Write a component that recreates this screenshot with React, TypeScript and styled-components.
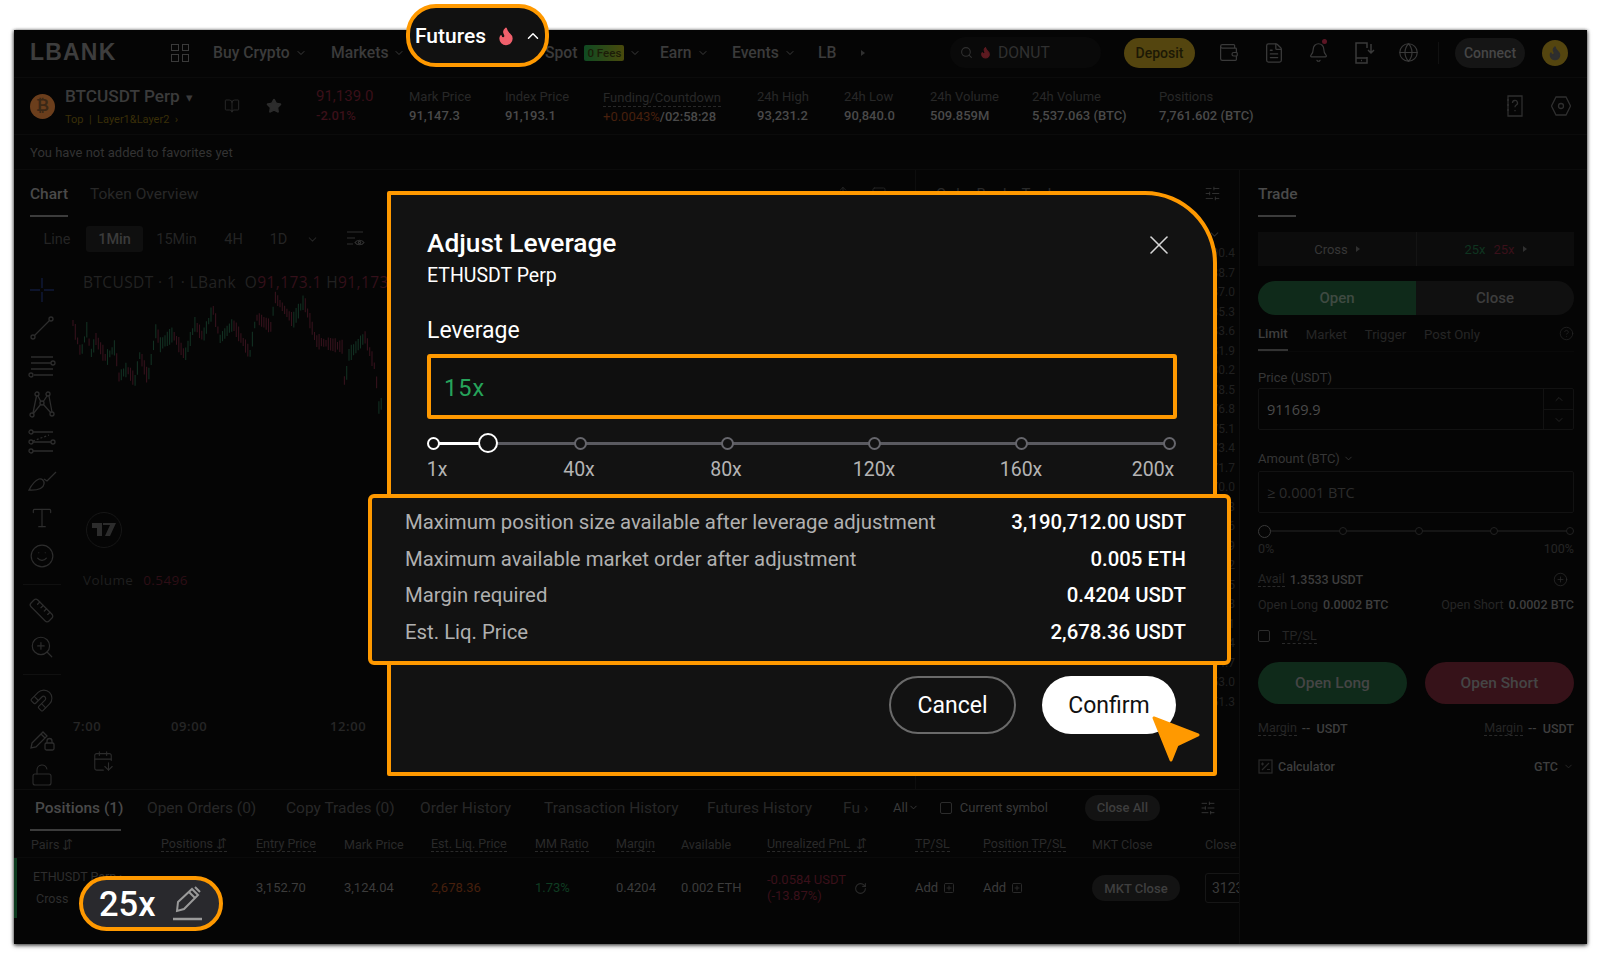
import React from "react";
import styled, { createGlobalStyle } from "styled-components";
import {
  Search, Flame, ChevronDown, ChevronUp, Wallet, FileText, Bell, Globe, Star, BookOpen, X,
  CirclePlus, CircleHelp, RotateCw, SquarePlus, SlidersHorizontal, Ruler, ZoomIn, Magnet, Smile, Type, LockOpen, CalendarArrowDown,
  Share, Square,
} from "lucide-react";

const Global = createGlobalStyle`
  html, body { margin: 0; background: #fff; }
  body { font-family: Roboto, "Noto Sans", "Liberation Sans", sans-serif; }
  * { box-sizing: border-box; }
`;

const orange = "#ff9900";
const dimA = "#3b3b3b";
const dimB = "#282828";
const dimC = "#4a4a4a";

const Stage = styled.div`
  position: relative;
  width: 1600px;
  height: 955px;
  padding: 30px 13px 11px 14px;
  overflow: hidden;
`;
const Win = styled.div`
  width: 100%;
  height: 100%;
  background: #050505;
  box-shadow: 0 2px 4px rgba(0, 0, 0, 0.55), -1px 0 3px rgba(0, 0, 0, 0.3), 1px 0 3px rgba(0, 0, 0, 0.3);
  display: flex;
  flex-direction: column;
  overflow: hidden;
`;

/* header */
const Header = styled.header`
  height: 48px;
  flex: none;
  display: flex;
  align-items: center;
  padding: 0 0 2px 16px;
  border-bottom: 1px solid #0b0b0b;
`;
const Logo = styled.div`
  width: 86px;
  font: 800 23px "Liberation Sans", sans-serif;
  letter-spacing: 1.2px;
  color: #3d3d3d;
  margin-right: 55px;
`;
const GridIcon = styled.div`
  width: 18px;
  height: 18px;
  display: grid;
  grid-template: 1fr 1fr / 1fr 1fr;
  gap: 3px;
  margin-right: 24px;
  span { border: 1.5px solid #3a3a3a; }
`;
const NavItem = styled.div<{ $w: number }>`
  width: ${(p) => p.$w}px;
  flex: none;
  display: flex;
  align-items: center;
  gap: 5px;
  font-size: 15.7px;
  font-weight: 500;
  color: ${dimA};
  white-space: nowrap;
  overflow: hidden;
`;
const Fees = styled.span`
  background: linear-gradient(90deg, #0f4a22, #4a4a0c);
  color: #1c1c08;
  font-size: 11.5px;
  padding: 1px 3px;
  border-radius: 2px;
  margin-left: 2px;
`;
const SearchBox = styled.div`
  width: 151px;
  height: 31px;
  margin-left: 85px;
  border-radius: 16px;
  background: #090909;
  display: flex;
  align-items: center;
  padding-left: 10px;
  gap: 6px;
  font-size: 15.7px;
  color: #303030;
`;
const Deposit = styled.div`
  width: 71px;
  height: 30px;
  margin-left: 23px;
  margin-right: 11px;
  border-radius: 15px;
  background: #54450f;
  color: #1c1805;
  font-size: 14px;
  font-weight: 500;
  display: flex;
  align-items: center;
  justify-content: center;
`;
const HeadIcon = styled.div`
  position: relative;
  width: 45px;
  flex: none;
  display: flex;
  justify-content: center;
  color: #3a3a3a;
`;
const Dot = styled.i`
  position: absolute;
  top: -3px;
  left: 26px;
  width: 5px;
  height: 5px;
  border-radius: 50%;
  background: #5c1524;
`;
const Divider = styled.div`
  width: 1px;
  height: 22px;
  background: #111;
  margin: 0 16px 0 7px;
`;
const Connect = styled.div`
  width: 70px;
  height: 30px;
  border-radius: 15px;
  background: #151515;
  color: #464646;
  font-size: 14px;
  font-weight: 500;
  display: flex;
  align-items: center;
  justify-content: center;
  margin-right: 17px;
`;
const Avatar = styled.div`
  width: 26px;
  height: 26px;
  border-radius: 50%;
  background: #54450f;
  display: flex;
  align-items: center;
  justify-content: center;
`;

/* ticker */
const Ticker = styled.div`
  height: 57px;
  flex: none;
  display: flex;
  align-items: center;
  padding-left: 16px;
  border-bottom: 1px solid #0b0b0b;
`;
const Coin = styled.div`
  width: 25px;
  height: 25px;
  border-radius: 50%;
  background: #6b3e1c;
  color: #3b2816;
  font: 700 16px "Liberation Sans", sans-serif;
  display: flex;
  align-items: center;
  justify-content: center;
  margin-right: 10px;
`;
const Pair = styled.div`
  width: 146px;
`;
const PairName = styled.div`
  font-size: 17.2px;
  font-weight: 500;
  color: ${dimA};
  line-height: 22px;
  margin-bottom: 3px;
  white-space: nowrap;
  span { margin-left: 6px; font-size: 13px; }
`;
const PairTags = styled.div`
  font-size: 11px;
  line-height: 16px;
  color: #3a2f08;
`;
const TickIcon = styled.div`
  width: 42px;
  display: flex;
  justify-content: center;
  color: #2c2c2c;
`;
const Stat = styled.div<{ $w: number; $ml?: number }>`
  width: ${(p) => p.$w}px;
  margin-left: ${(p) => p.$ml ?? 0}px;
  flex: none;
  white-space: nowrap;
`;
const StatLabel = styled.div<{ $dash?: boolean; $c?: string; $big?: boolean }>`
  font-size: ${(p) => (p.$big ? 15 : 13)}px;
  line-height: 19px;
  color: ${(p) => p.$c ?? dimB};
  ${(p) => p.$dash && `display:inline-block; line-height: 17px; border-bottom: 1px dashed ${dimB};`}
`;
const StatValue = styled.div<{ $c?: string }>`
  font-size: 13px;
  font-weight: 500;
  line-height: 19px;
  color: ${(p) => p.$c ?? dimC};
  span { color: #47200d; font-weight: 400; }
`;
const TickRight = styled.div`
  margin-left: auto;
  display: flex;
  align-items: center;
  color: #2f2f2f;
  gap: 27px;
  padding-right: 16px;
`;
const Favorites = styled.div`
  height: 35px;
  flex: none;
  display: flex;
  align-items: center;
  padding-left: 16px;
  font-size: 13px;
  color: #333;
  border-bottom: 1px solid #0b0b0b;
`;

/* body */
const Body = styled.div`
  flex: 1;
  min-height: 0;
  display: flex;
`;
const LeftCol = styled.div`
  width: 1226px;
  flex: none;
  display: flex;
  flex-direction: column;
  border-right: 1px solid #0d0d0d;
`;
const Upper = styled.div`
  height: 620px;
  flex: none;
  display: flex;
  border-bottom: 1px solid #0d0d0d;
`;
const ChartCol = styled.div`
  width: 902px;
  flex: none;
  display: flex;
  flex-direction: column;
  border-right: 1px solid #0d0d0d;
`;
const Tabs = styled.div<{ $h: number; $pl?: number }>`
  height: ${(p) => p.$h}px;
  flex: none;
  display: flex;
  padding-left: ${(p) => p.$pl ?? 0}px;
  align-items: stretch;
`;
const Tab = styled.div<{ $on?: boolean; $w?: number; $ul?: number; $pb?: number }>`
  position: relative;
  ${(p) => (p.$w ? `width: ${p.$w}px; flex: none;` : "")}
  font-size: 15.5px;
  font-weight: ${(p) => (p.$on ? 500 : 400)};
  color: ${(p) => (p.$on ? dimC : dimB)};
  display: flex;
  align-items: center;
  padding-bottom: ${(p) => p.$pb ?? 0}px;
  white-space: nowrap;
  &::after {
    content: "";
    display: ${(p) => (p.$on ? "block" : "none")};
    position: absolute;
    left: ${(p) => (p.$ul ? -5 : 0)}px;
    bottom: 0;
    width: ${(p) => p.$ul ?? 38}px;
    height: 2px;
    background: #3c3c3c;
  }
`;
const TabIcons = styled.div`
  margin-left: auto;
  padding-right: 28px;
  display: flex;
  align-items: center;
  gap: 20px;
  color: #2a2a2a;
`;
const TimeBar = styled.div`
  height: 44px;
  flex: none;
  display: flex;
  align-items: center;
  padding-left: 14px;
  font-size: 14.5px;
  color: #242424;
`;
const TimeItem = styled.div<{ $w: number; $on?: boolean }>`
  width: ${(p) => p.$w}px;
  height: 26px;
  flex: none;
  display: flex;
  align-items: center;
  justify-content: center;
  border-radius: 3px;
  ${(p) => p.$on && `background:#0f0f0f; color:#3b3b3b; font-weight:500;`}
`;
const TimeChevron = styled.div`
  margin-left: 6px;
  display: flex;
`;
const TimeIcon = styled.div`
  margin-left: 27px;
  display: flex;
  color: #303030;
`;
const ChartBody = styled.div`
  flex: 1;
  min-height: 0;
  display: flex;
`;
const ToolRail = styled.div`
  width: 55px;
  flex: none;
  padding-top: 10px;
  display: flex;
  flex-direction: column;
  align-items: center;
  color: #2d2d2d;
  overflow: hidden;
`;
const Tool = styled.div<{ $h: number }>`
  height: ${(p) => p.$h}px;
  flex: none;
  display: flex;
  align-items: center;
  justify-content: center;
`;
const RailSep = styled.div<{ $mt: number }>`
  width: 38px;
  height: 1px;
  flex: none;
  margin-top: ${(p) => p.$mt}px;
  background: #101010;
`;
const Plot = styled.div`
  position: relative;
  flex: 1;
  font-family: "Open Sans", "Liberation Sans", sans-serif;
`;
const Legend = styled.div`
  position: absolute;
  left: 14px;
  top: 10px;
  font-size: 15.5px;
  letter-spacing: 0.4px;
  color: #222;
  white-space: nowrap;
  span { color: #34101a; }
`;
const VolumeTag = styled.div`
  position: absolute;
  left: 14px;
  top: 310px;
  font-size: 13.5px;
  letter-spacing: 0.4px;
  color: #1f1f1f;
  span { color: #2d0e16; margin-left: 6px; }
`;
const TV = styled.div`
  position: absolute;
  left: 17px;
  top: 251px;
  width: 36px;
  height: 36px;
  border-radius: 50%;
  border: 1px solid #161616;
  color: #2c2c2c;
  display: flex;
  align-items: center;
  justify-content: center;
`;
const TimeLabel = styled.div<{ $x: number }>`
  position: absolute;
  left: ${(p) => p.$x}px;
  top: 456px;
  font-size: 13px;
  font-weight: 600;
  letter-spacing: 0.6px;
  color: #262626;
`;
const CalendarSpot = styled.div`
  position: absolute;
  left: 23px;
  top: 489px;
  color: #2c2c2c;
`;
const ChartSvg = styled.svg`
  position: absolute;
  left: 0;
  top: 0;
`;
const Book = styled.div`
  flex: 1;
  min-width: 0;
  padding: 0 18px 0 20px;
  display: flex;
  flex-direction: column;
`;
const BookHead = styled.div`
  height: 47px;
  flex: none;
  display: flex;
  align-items: center;
  justify-content: space-between;
  font-size: 15px;
  color: #2a2a2a;
  svg { color: #333; }
`;
const BookFilter = styled.div`
  height: 24px;
  flex: none;
  margin-top: 5px;
  display: flex;
  justify-content: flex-end;
  align-items: center;
  color: #2a2a2a;
`;
const BookRow = styled.div`
  height: 19.5px;
  flex: none;
  margin-right: -14px;
  font-size: 12px;
  text-align: right;
  color: #202020;
`;

/* positions */
const Positions = styled.div`
  flex: 1;
  min-height: 0;
  overflow: hidden;
`;
const PosTools = styled.div`
  display: flex;
  align-items: center;
  padding-bottom: 6px;
  font-size: 13px;
  color: #3a3a3a;
  white-space: nowrap;
`;
const AllSpace = styled.span`
  width: 21px;
`;
const Check = styled.span<{ $mr: number }>`
  width: 12px;
  height: 12px;
  border: 1px solid #2c2c2c;
  border-radius: 2px;
  margin-right: ${(p) => p.$mr}px;
  flex: none;
`;
const CloseAll = styled.div`
  width: 75px;
  height: 26px;
  margin: 0 40px 0 37px;
  border-radius: 13px;
  background: #131313;
  color: #3e3e3e;
  display: flex;
  align-items: center;
  justify-content: center;
  font-weight: 500;
`;
const colTpl = "130px 95px 88px 87px 104px 81px 65px 86px 148px 68px 109px 113px 40px";
const HeadRow = styled.div`
  height: 27px;
  display: grid;
  grid-template-columns: ${colTpl};
  align-items: center;
  padding-left: 17px;
  font-size: 12.5px;
  color: #2a2a2a;
  white-space: nowrap;
  border-bottom: 1px solid #0a0a0a;
`;
const Dash = styled.span`
  border-bottom: 1px dashed #2a2a2a;
  justify-self: start;
`;
const DataRow = styled.div`
  height: 60px;
  display: grid;
  grid-template-columns: ${colTpl};
  align-items: center;
  padding-left: 14px;
  border-left: 3px solid #0c3a1e;
  font-size: 13px;
  color: #3c3c3c;
  white-space: nowrap;
`;
const PairCell = styled.div`
  font-size: 12.5px;
  line-height: 22px;
  color: #2e2e2e;
  padding-left: 2px;
`;
const Cell = styled.div<{ $c?: string }>`
  color: ${(p) => p.$c ?? "#3c3c3c"};
  display: flex;
  align-items: center;
  gap: 5px;
  line-height: 16px;
`;
const PnL = styled.div`
  color: #3a101a;
  line-height: 16px;
`;
const PnLCell = styled.div`
  display: flex;
  align-items: center;
  gap: 8px;
  svg { color: #2a2a2a; }
`;
const MktBtn = styled.div`
  width: 88px;
  height: 26px;
  border-radius: 13px;
  background: #131313;
  color: #3f3f3f;
  font-weight: 500;
  display: flex;
  align-items: center;
  justify-content: center;
`;
const CloseInput = styled.div`
  width: 60px;
  height: 30px;
  border: 1px solid #161616;
  border-radius: 3px;
  padding: 0 6px;
  font-size: 14px;
  line-height: 28px;
  color: #3a3a3a;
`;

/* trade */
const Trade = styled.aside`
  flex: 1;
  padding: 0 13px 0 18px;
  display: flex;
  flex-direction: column;
`;
const CrossBox = styled.div`
  margin-top: 15px;
  height: 34px;
  flex: none;
  background: #0c0c0c;
  display: grid;
  grid-template-columns: 1fr 1fr;
  font-size: 13px;
  color: #373737;
  & > div { display: flex; align-items: center; justify-content: center; gap: 8px; }
  & > div + div { border-left: 1px solid #141414; }
`;
const Tri = styled.i`
  width: 0;
  height: 0;
  border-left: 4px solid #303030;
  border-top: 3px solid transparent;
  border-bottom: 3px solid transparent;
`;
const Leverage = styled.span<{ $c: string }>`
  color: ${(p) => p.$c};
`;
const Switch = styled.div`
  margin-top: 15px;
  height: 34px;
  flex: none;
  display: grid;
  grid-template-columns: 1fr 1fr;
  font-size: 15px;
  font-weight: 500;
  border-radius: 17px;
  overflow: hidden;
`;
const SwitchPart = styled.div<{ $on?: boolean }>`
  display: flex;
  align-items: center;
  justify-content: center;
  background: ${(p) => (p.$on ? "#0f2a1a" : "#101010")};
  color: ${(p) => (p.$on ? "#3f4a42" : "#3d3d3d")};
`;
const OrderTabs = styled.div`
  height: 37px;
  flex: none;
  display: flex;
  align-items: stretch;
  gap: 18px;
  font-size: 13.2px;
  color: #262626;
  border-bottom: 1px solid #090909;
  & > svg { margin-left: auto; align-self: center; color: #252525; }
`;
const OrderTab = styled.div<{ $on?: boolean }>`
  position: relative;
  display: flex;
  align-items: center;
  padding-top: 2px;
  ${(p) => p.$on && `color:#3e3e3e; font-weight:500; border-bottom: 2px solid #333;`}
`;
const FieldLabel = styled.div<{ $mt: number }>`
  margin-top: ${(p) => p.$mt}px;
  height: 20px;
  flex: none;
  display: flex;
  align-items: center;
  gap: 3px;
  font-size: 13px;
  color: #363636;
`;
const Field = styled.div<{ $mt: number; $c: string }>`
  margin-top: ${(p) => p.$mt}px;
  height: 42px;
  flex: none;
  display: flex;
  align-items: center;
  justify-content: space-between;
  padding-left: 8px;
  border: 1px solid #121212;
  border-radius: 2px;
  font-family: "Open Sans", "Liberation Sans", sans-serif;
  font-size: 14.5px;
  color: ${(p) => p.$c};
`;
const Stepper = styled.div`
  width: 30px;
  height: 100%;
  border-left: 1px solid #121212;
  display: grid;
  grid-template-rows: 1fr 1fr;
  color: #242424;
  & > div { display: flex; align-items: center; justify-content: center; }
  & > div + div { border-top: 1px solid #121212; }
`;
const MiniSlider = styled.div`
  position: relative;
  height: 14px;
  margin-top: 11px;
  flex: none;
  display: flex;
  align-items: center;
  justify-content: space-between;
  &::before {
    content: "";
    position: absolute;
    left: 6px;
    right: 4px;
    top: 6px;
    height: 1.5px;
    background: #151515;
  }
`;
const MiniDot = styled.i<{ $big?: boolean }>`
  position: relative;
  width: ${(p) => (p.$big ? 13 : 8)}px;
  height: ${(p) => (p.$big ? 13 : 8)}px;
  border-radius: 50%;
  border: 1px solid ${(p) => (p.$big ? "#3a3a3a" : "#222")};
  background: #050505;
`;
const Between = styled.div<{ $mt: number; $h: number; $size?: number }>`
  margin-top: ${(p) => p.$mt}px;
  height: ${(p) => p.$h}px;
  flex: none;
  display: flex;
  align-items: center;
  justify-content: space-between;
  font-size: ${(p) => p.$size ?? 12.5}px;
  color: #262626;
  white-space: nowrap;
`;
const Group = styled.div`
  display: flex;
  align-items: center;
  gap: 5px;
  svg { color: #2a2a2a; }
`;
const AddFunds = styled.div`
  display: flex;
  margin-right: 6px;
  color: #2c2c2c;
`;
const Val = styled.span`
  color: #3e3e3e;
  font-weight: 500;
`;
const Under = styled.span`
  border-bottom: 1px dashed #2a2a2a;
`;
const Buy = styled.div<{ $bg: string }>`
  width: 149px;
  height: 42px;
  border-radius: 21px;
  background: ${(p) => p.$bg};
  color: #454545;
  font-size: 15.5px;
  font-weight: 500;
  display: flex;
  align-items: center;
  justify-content: center;
`;

/* overlays */
const FuturesPill = styled.div`
  position: absolute;
  left: 406px;
  top: 4px;
  width: 143px;
  height: 63px;
  border: 4px solid ${orange};
  border-radius: 30px;
  background: #111;
  color: #fff;
  font-size: 21px;
  font-weight: 500;
  display: flex;
  align-items: center;
  padding-left: 5px;
  svg:first-of-type { margin-left: 10px; }
  svg:last-of-type { margin-left: 8px; }
`;
const LevPill = styled.div`
  position: absolute;
  left: 79px;
  top: 876px;
  width: 144px;
  height: 55px;
  border: 4px solid ${orange};
  border-radius: 28px;
  background: #29292d;
  color: #fff;
  font-size: 34.5px;
  font-weight: 500;
  display: flex;
  align-items: center;
  padding-left: 16px;
  gap: 16px;
`;
const Modal = styled.div`
  position: absolute;
  left: 387px;
  top: 191px;
  width: 830px;
  height: 585px;
  background: #121212;
  border: 4px solid ${orange};
  border-radius: 2px 72px 3px 2px;
  padding: 31px 36px 0 36px;
`;
const ModalHead = styled.div`
  display: flex;
  align-items: flex-start;
  justify-content: space-between;
`;
const Title = styled.div`
  font-size: 26.3px;
  font-weight: 500;
  line-height: 34px;
  color: #fff;
`;
const Sub = styled.div`
  margin-top: 4px;
  font-size: 19.5px;
  line-height: 24px;
  color: #fff;
`;
const CloseX = styled.div`
  margin: 3px 2px 0 0;
  color: #d6d6d6;
  display: flex;
`;
const Label = styled.div`
  margin-top: 30px;
  font-size: 23px;
  line-height: 26px;
  color: #fff;
`;
const LevInput = styled.div`
  margin-top: 10px;
  height: 65px;
  border: 4px solid ${orange};
  border-radius: 3px;
  background: #0f0f0f;
  display: flex;
  align-items: center;
  padding-left: 13px;
  font-size: 23.5px;
  letter-spacing: 1px;
  padding-top: 3px;
  color: #26a35a;
`;
const SliderBox = styled.div`
  position: relative;
  margin-top: 12px;
  height: 24px;
`;
const Rail = styled.div`
  position: absolute;
  left: 6px;
  right: 8px;
  top: 10.5px;
  height: 3px;
  background: #5a5a60;
`;
const RailOn = styled.div`
  position: absolute;
  left: 6px;
  width: 56px;
  top: 10.5px;
  height: 3px;
  background: #fff;
`;
const Mark = styled.i<{ $x: number; $on?: boolean }>`
  position: absolute;
  left: ${(p) => p.$x - 6.5}px;
  top: 5.5px;
  width: 13px;
  height: 13px;
  border-radius: 50%;
  border: 2px solid ${(p) => (p.$on ? "#fff" : "#66666c")};
  background: #121212;
`;
const Thumb = styled.i`
  position: absolute;
  left: 51px;
  top: 2px;
  width: 20px;
  height: 20px;
  border-radius: 50%;
  border: 2.5px solid #fff;
  background: #121212;
`;
const ScaleBox = styled.div`
  position: relative;
  margin-top: 3px;
  height: 24px;
`;
const ScaleLabel = styled.span<{ $x: number }>`
  position: absolute;
  left: ${(p) => p.$x}px;
  transform: translateX(-50%);
  font-size: 19.5px;
  line-height: 24px;
  color: #b4b4b4;
`;
const InfoBox = styled.div`
  margin: 12px -54px 0 -59px;
  height: 171px;
  background: #121212;
  border: 4px solid ${orange};
  border-radius: 6px;
  padding: 6px 41px 0 33px;
  position: relative;
`;
const InfoRow = styled.div`
  height: 36.5px;
  display: flex;
  align-items: center;
  justify-content: space-between;
  font-size: 20.35px;
  color: #b0b0b0;
`;
const InfoVal = styled.span`
  color: #fff;
  font-weight: 500;
`;
const BtnRow = styled.div`
  margin-top: 11px;
  padding-right: 1px;
  display: flex;
  justify-content: flex-end;
  gap: 26px;
`;
const Cancel = styled.div`
  width: 127px;
  height: 58px;
  border-radius: 29px;
  border: 2px solid #6a6a6a;
  color: #fff;
  font-size: 23px;
  display: flex;
  align-items: center;
  justify-content: center;
`;
const Confirm = styled(Cancel)`
  width: 134px;
  border: none;
  background: #fff;
  color: #111;
`;
const CursorArrow = styled.svg`
  position: absolute;
  left: 1148px;
  top: 712px;
`;

const pts: [number, number][] = [
  [0, 54], [8, 85], [14, 60], [18, 85], [23, 70], [33, 90], [42, 78], [46, 108], [54, 100], [62, 112], [67, 85], [75, 110],
  [84, 55], [86, 77], [100, 65], [112, 87], [122, 55], [130, 68], [140, 40], [147, 70], [160, 55], [177, 85], [183, 48],
  [198, 58], [202, 28], [220, 52], [231, 32], [243, 72], [270, 78], [272, 126], [275, 87], [292, 68], [303, 102], [305, 140], [310, 132],
];
function buildCandles() {
  const out: { x: number; y1: number; y2: number; up: boolean }[] = [];
  for (let x = 0; x < 310; x += 2.3) {
    let i = 0;
    while (i < pts.length - 2 && pts[i + 1][0] < x) i++;
    const [a, b] = [pts[i], pts[i + 1]];
    const t = (x - a[0]) / Math.max(1, b[0] - a[0]);
    const y = a[1] + (b[1] - a[1]) * t;
    const j = (Math.sin(x * 12.9898) * 43758.5453) % 1;
    const h = 6 + Math.abs(j) * 10;
    out.push({ x, y1: y - h / 2, y2: y + h / 2, up: b[1] < a[1] });
  }
  return out;
}
const candles = buildCandles();
const bookPrices = Array.from({ length: 24 }, (_, i) => (91190.4 - i * 1.7).toFixed(1));

const Cross = () => (
  <svg width="28" height="28" viewBox="0 0 28 28" fill="none" stroke="#101a3a" strokeWidth="1.4">
    <path d="M14 2v10M14 16v10M2 14h10M16 14h10" />
  </svg>
);
const LineTool = () => (
  <svg width="28" height="28" viewBox="0 0 28 28" fill="none" stroke="currentColor" strokeWidth="1.3">
    <circle cx="5" cy="23" r="2" /><circle cx="23" cy="5" r="2" /><path d="M6.5 21.5 21.5 6.5" />
  </svg>
);
const HLines = () => (
  <svg width="30" height="28" viewBox="0 0 30 28" fill="none" stroke="currentColor" strokeWidth="1.3">
    <path d="M4 5h22M4 11h20M4 17h22M7 23h19" /><circle cx="26" cy="11" r="2" /><circle cx="4" cy="23" r="2" />
  </svg>
);
const NetTool = () => (
  <svg width="28" height="28" viewBox="0 0 28 28" fill="none" stroke="currentColor" strokeWidth="1.3">
    <circle cx="4" cy="25" r="2" /><circle cx="9" cy="4" r="2" /><circle cx="20" cy="4" r="2" /><circle cx="24" cy="24" r="2" /><circle cx="14" cy="13" r="2" />
    <path d="M5 23 8.5 6M10 6l3 6M19 6l-4 6M21 6l3 16M5 24 13 14M15 14l8 9" />
  </svg>
);
const FibTool = () => (
  <svg width="30" height="26" viewBox="0 0 30 26" fill="none" stroke="currentColor" strokeWidth="1.3">
    <circle cx="4" cy="3" r="2" /><circle cx="4" cy="13" r="2" /><circle cx="26" cy="13" r="2" /><circle cx="4" cy="22" r="2" />
    <path d="M6 3h20M6 13h18M6 22h20" /><path d="M6 12 22 6" strokeDasharray="2 2" />
  </svg>
);
const BrushTool = () => (
  <svg width="30" height="26" viewBox="0 0 30 26" fill="none" stroke="currentColor" strokeWidth="1.3">
    <path d="M2 23c4 0 14 1 15-6 .5-3-2-6-5-5-5 2-8 7-10 11ZM17 12l3 2 9-9" />
  </svg>
);
const Lock2 = () => (
  <svg width="26" height="26" viewBox="0 0 26 26" fill="none" stroke="currentColor" strokeWidth="1.3">
    <path d="m3 17 11-11 4 4-11 11-5 1zM12 8l4 4" /><rect x="16" y="17" width="9" height="7" rx="1.5" /><path d="M18 17v-2a2.5 2.5 0 0 1 5 0v2" />
  </svg>
);
const PencilUnder = () => (
  <svg width="32" height="36" viewBox="0 0 32 36" fill="none" stroke="#9a9a9a" strokeWidth="2">
    <path d="M5 25 6 16 20 3l6 6-14 14-7 2ZM17 6l6 6M23 1l5 5" />
    <path d="M1 33h29" strokeWidth="2.5" />
  </svg>
);
const Phone = () => (
  <svg width="22" height="24" viewBox="0 0 22 24" fill="none" stroke="currentColor" strokeWidth="1.5">
    <path d="M14 7V2H3v20h11v-6M3 17h11M8 19.5h1M18 3v9m-3-3 3 3 3-3" />
  </svg>
);
const HelpDoc = () => (
  <svg width="18" height="22" viewBox="0 0 18 22" fill="none" stroke="currentColor" strokeWidth="1.3">
    <path d="M2 1h14v20H2zM1 5h2M1 10h2M1 15h2" />
    <path d="M6.5 8a2.5 2.5 0 1 1 3.6 2.2c-.8.5-1.1 1-1.1 2M9 15v1.2" />
  </svg>
);
const HexGear = () => (
  <svg width="20" height="22" viewBox="0 0 20 22" fill="none" stroke="currentColor" strokeWidth="1.3">
    <path d="M5 2h10l4.500 9L15 20H5L.5 11z" /><circle cx="10" cy="11" r="2.500" />
  </svg>
);
const EyeList = () => (
  <svg width="20" height="18" viewBox="0 0 20 18" fill="none" stroke="currentColor" strokeWidth="1.2">
    <path d="M1 2h16M1 8h8M1 14h6" /><path d="M9 12.500c2-3 7-3 9 0-2 3-7 3-9 0Z" /><circle cx="13.500" cy="12.500" r="1.200" />
  </svg>
);
const PercentBox = () => (
  <svg width="15" height="15" viewBox="0 0 15 15" fill="none" stroke="currentColor" strokeWidth="1.2">
    <rect x="1" y="1" width="13" height="13" /><path d="M4 11 11 4M3 5h3M4.500 3.500v3M9 10.500h3" />
  </svg>
);

export default function App() {
  return (
    <>
      <Global />
      <Stage>
        <Win>
          <Header>
            <Logo>LBANK</Logo>
            <GridIcon><span /><span /><span /><span /></GridIcon>
            <NavItem $w={118}>Buy Crypto <ChevronDown size={12} /></NavItem>
            <NavItem $w={214}>Markets <ChevronDown size={12} /></NavItem>
            <NavItem $w={115}>Spot <Fees>0 Fees</Fees> <ChevronDown size={12} /></NavItem>
            <NavItem $w={72}>Earn <ChevronDown size={12} /></NavItem>
            <NavItem $w={86}>Events <ChevronDown size={12} /></NavItem>
            <NavItem $w={43}>LB</NavItem>
            <Tri />
            <SearchBox><Search size={13} /><Flame size={13} fill="#5c1a20" color="#5c1a20" />DONUT</SearchBox>
            <Deposit>Deposit</Deposit>
            <HeadIcon><Wallet size={21} strokeWidth={1.4} /></HeadIcon>
            <HeadIcon><FileText size={22} strokeWidth={1.4} /></HeadIcon>
            <HeadIcon><Bell size={21} strokeWidth={1.4} /><Dot /></HeadIcon>
            <HeadIcon><Phone /></HeadIcon>
            <HeadIcon><Globe size={21} strokeWidth={1.3} /></HeadIcon>
            <Divider />
            <Connect>Connect</Connect>
            <Avatar><Flame size={16} fill="#2e2e2e" color="#2e2e2e" /></Avatar>
          </Header>
          <Ticker>
            <Coin>₿</Coin>
            <Pair>
              <PairName>BTCUSDT Perp<span>▾</span></PairName>
              <PairTags>Top&nbsp; | &nbsp;Layer1&amp;Layer2 &nbsp;›</PairTags>
            </Pair>
            <TickIcon><BookOpen size={16} strokeWidth={1.3} /></TickIcon>
            <TickIcon><Star size={16} fill="#2c2c2c" /></TickIcon>
            <Stat $w={93} $ml={21}>
              <StatLabel $c="#3a1019" $big>91,139.0</StatLabel>
              <StatValue $c="#3a1019">-2.01%</StatValue>
            </Stat>
            <Stat $w={96}><StatLabel>Mark Price</StatLabel><StatValue>91,147.3</StatValue></Stat>
            <Stat $w={98}><StatLabel>Index Price</StatLabel><StatValue>91,193.1</StatValue></Stat>
            <Stat $w={154}><StatLabel $dash>Funding/Countdown</StatLabel><StatValue><span>+0.0043%</span>/02:58:28</StatValue></Stat>
            <Stat $w={87}><StatLabel>24h High</StatLabel><StatValue>93,231.2</StatValue></Stat>
            <Stat $w={86}><StatLabel>24h Low</StatLabel><StatValue>90,840.0</StatValue></Stat>
            <Stat $w={102}><StatLabel>24h Volume</StatLabel><StatValue>509.859M</StatValue></Stat>
            <Stat $w={127}><StatLabel>24h Volume</StatLabel><StatValue>5,537.063 (BTC)</StatValue></Stat>
            <Stat $w={120}><StatLabel>Positions</StatLabel><StatValue>7,761.602 (BTC)</StatValue></Stat>
            <TickRight><HelpDoc /><HexGear /></TickRight>
          </Ticker>
          <Favorites>You have not added to favorites yet</Favorites>
          <Body>
            <LeftCol>
              <Upper>
                <ChartCol>
                  <Tabs $h={47} $pl={16}>
                    <Tab $on $w={60}>Chart</Tab>
                    <Tab>Token Overview</Tab>
                    <TabIcons><Share size={16} strokeWidth={1.2} /><Square size={16} strokeWidth={1.2} /></TabIcons>
                  </Tabs>
                  <TimeBar>
                    <TimeItem $w={58}>Line</TimeItem>
                    <TimeItem $w={57} $on>1Min</TimeItem>
                    <TimeItem $w={67}>15Min</TimeItem>
                    <TimeItem $w={47}>4H</TimeItem>
                    <TimeItem $w={43}>1D</TimeItem>
                    <TimeChevron><ChevronDown size={13} /></TimeChevron>
                    <TimeIcon><EyeList /></TimeIcon>
                  </TimeBar>
                  <ChartBody>
                    <ToolRail>
                      <Tool $h={38}><Cross /></Tool>
                      <Tool $h={38}><LineTool /></Tool>
                      <Tool $h={38}><HLines /></Tool>
                      <Tool $h={38}><NetTool /></Tool>
                      <Tool $h={38}><FibTool /></Tool>
                      <Tool $h={38}><BrushTool /></Tool>
                      <Tool $h={38}><Type size={26} strokeWidth={1.1} /></Tool>
                      <Tool $h={38}><Smile size={26} strokeWidth={1.1} /></Tool>
                      <RailSep $mt={9} />
                      <Tool $h={50}><Ruler size={27} strokeWidth={1.1} /></Tool>
                      <Tool $h={24}><ZoomIn size={26} strokeWidth={1.1} /></Tool>
                      <RailSep $mt={15} />
                      <Tool $h={50}><Magnet size={25} strokeWidth={1.1} /></Tool>
                      <Tool $h={28}><Lock2 /></Tool>
                      <Tool $h={44}><LockOpen size={24} strokeWidth={1.1} /></Tool>
                    </ToolRail>
                    <Plot>
                      <ChartSvg width="330" height="180" viewBox="0 0 330 180">
                        {candles.map((c, i) => (
                          <line key={i} x1={c.x + 4} x2={c.x + 4} y1={c.y1 + 8} y2={c.y2 + 8} stroke={c.up ? "#123022" : "#35121c"} strokeWidth="1.1" />
                        ))}
                      </ChartSvg>
                      <Legend>BTCUSDT · 1 · LBank &nbsp;O<span>91,173.1</span> H<span>91,173</span></Legend>
                      <TV>
                        <svg width="24" height="14" viewBox="0 0 24 14" fill="currentColor"><path d="M0 0h10v13H5V5H0zM11 0h13l-6 13h-5l5-11h-7z" /></svg>
                      </TV>
                      <VolumeTag>Volume <span>0.5496</span></VolumeTag>
                      <TimeLabel $x={4}>7:00</TimeLabel>
                      <TimeLabel $x={102}>09:00</TimeLabel>
                      <TimeLabel $x={261}>12:00</TimeLabel>
                      <CalendarSpot><CalendarArrowDown size={22} strokeWidth={1.2} /></CalendarSpot>
                    </Plot>
                  </ChartBody>
                </ChartCol>
                <Book>
                  <BookHead>
                    <span>Order Book &nbsp; Trades</span>
                    <SlidersHorizontal size={17} strokeWidth={1.3} />
                  </BookHead>
                  <BookFilter><ChevronDown size={13} /></BookFilter>
                  {bookPrices.map((p) => (
                    <BookRow key={p}>{p}</BookRow>
                  ))}
                </Book>
              </Upper>
              <Positions>
                <Tabs $h={41} $pl={21}>
                  <Tab $on $w={112} $ul={91} $pb={6}>Positions (1)</Tab>
                  <Tab $w={139} $pb={6}>Open Orders (0)</Tab>
                  <Tab $w={134} $pb={6}>Copy Trades (0)</Tab>
                  <Tab $w={124} $pb={6}>Order History</Tab>
                  <Tab $w={163} $pb={6}>Transaction History</Tab>
                  <Tab $w={136} $pb={6}>Futures History</Tab>
                  <Tab $w={50} $pb={6}>Fu&nbsp;›</Tab>
                  <PosTools>
                    All <ChevronDown size={11} />
                    <AllSpace />
                    <Check $mr={8} />Current symbol
                    <CloseAll>Close All</CloseAll>
                    <SlidersHorizontal size={16} strokeWidth={1.3} />
                  </PosTools>
                </Tabs>
                <HeadRow>
                  <span>Pairs ⇵</span>
                  <Dash>Positions ⇵</Dash>
                  <Dash>Entry Price</Dash>
                  <span>Mark Price</span>
                  <Dash>Est. Liq. Price</Dash>
                  <Dash>MM Ratio</Dash>
                  <Dash>Margin</Dash>
                  <span>Available</span>
                  <Dash>Unrealized PnL&nbsp;&nbsp;⇵</Dash>
                  <Dash>TP/SL</Dash>
                  <Dash>Position TP/SL</Dash>
                  <span>MKT Close</span>
                  <span>Close</span>
                </HeadRow>
                <DataRow>
                  <PairCell>ETHUSDT Perp ›<br />&nbsp;Cross</PairCell>
                  <span />
                  <Cell>3,152.70</Cell>
                  <Cell>3,124.04</Cell>
                  <Cell $c="#47200d">2,678.36</Cell>
                  <Cell $c="#0f3d22">1.73%</Cell>
                  <Cell>0.4204</Cell>
                  <Cell>0.002 ETH</Cell>
                  <PnLCell><PnL>-0.0584 USDT<br />(-13.87%)</PnL><RotateCw size={13} /></PnLCell>
                  <Cell>Add <SquarePlus size={12} color="#2a2a2a" /></Cell>
                  <Cell>Add <SquarePlus size={12} color="#2a2a2a" /></Cell>
                  <MktBtn>MKT Close</MktBtn>
                  <CloseInput>3123</CloseInput>
                </DataRow>
              </Positions>
            </LeftCol>
            <Trade>
              <Tabs $h={47}><Tab $on>Trade</Tab></Tabs>
              <CrossBox>
                <div>Cross <Tri /></div>
                <div><Leverage $c="#0f3420">25x</Leverage> <Leverage $c="#3a101a">25x</Leverage> <Tri /></div>
              </CrossBox>
              <Switch><SwitchPart $on>Open</SwitchPart><SwitchPart>Close</SwitchPart></Switch>
              <OrderTabs>
                <OrderTab $on>Limit</OrderTab>
                <OrderTab>Market</OrderTab>
                <OrderTab>Trigger</OrderTab>
                <OrderTab>Post Only</OrderTab>
                <CircleHelp size={15} strokeWidth={1.2} />
              </OrderTabs>
              <FieldLabel $mt={15}>Price (USDT)</FieldLabel>
              <Field $mt={1} $c="#4a4a4a">
                91169.9
                <Stepper><div><ChevronUp size={12} /></div><div><ChevronDown size={12} /></div></Stepper>
              </Field>
              <FieldLabel $mt={18}>Amount (BTC) <ChevronDown size={11} /></FieldLabel>
              <Field $mt={3} $c="#2c2c2c">≥ 0.0001 BTC</Field>
              <MiniSlider><MiniDot $big /><MiniDot /><MiniDot /><MiniDot /><MiniDot /></MiniSlider>
              <Between $mt={1} $h={18}><span>0%</span><span>100%</span></Between>
              <Between $mt={12} $h={20}>
                <Group><Under>Avail</Under><Val>1.3533 USDT</Val></Group>
                <AddFunds><CirclePlus size={15} strokeWidth={1.2} /></AddFunds>
              </Between>
              <Between $mt={5} $h={20}>
                <Group>Open Long <Val>0.0002 BTC</Val></Group>
                <Group>Open Short <Val>0.0002 BTC</Val></Group>
              </Between>
              <Between $mt={12} $h={20}>
                <Group><Check $mr={7} /><Under>TP/SL</Under></Group>
              </Between>
              <Between $mt={16} $h={42}>
                <Buy $bg="#0f2a1a">Open Long</Buy>
                <Buy $bg="#361219">Open Short</Buy>
              </Between>
              <Between $mt={14} $h={20}>
                <Group><Under>Margin</Under><Val>--&nbsp; USDT</Val></Group>
                <Group><Under>Margin</Under><Val>--&nbsp; USDT</Val></Group>
              </Between>
              <Between $mt={18} $h={20}>
                <Group><PercentBox /><Val>Calculator</Val></Group>
                <Group><Val>GTC</Val><ChevronDown size={11} /></Group>
              </Between>
            </Trade>
          </Body>
        </Win>

        <FuturesPill>
          Futures
          <Flame size={20} fill="#f0606c" color="#f0606c" />
          <ChevronUp size={18} />
        </FuturesPill>
        <LevPill>25x <PencilUnder /></LevPill>

        <Modal>
          <ModalHead>
            <div>
              <Title>Adjust Leverage</Title>
              <Sub>ETHUSDT Perp</Sub>
            </div>
            <CloseX><X size={32} strokeWidth={1.2} /></CloseX>
          </ModalHead>
          <Label>Leverage</Label>
          <LevInput>15x</LevInput>
          <SliderBox>
            <Rail />
            <RailOn />
            <Mark $x={6} $on />
            <Mark $x={153} />
            <Mark $x={300} />
            <Mark $x={447} />
            <Mark $x={594} />
            <Mark $x={742} />
            <Thumb />
          </SliderBox>
          <ScaleBox>
            <ScaleLabel $x={10}>1x</ScaleLabel>
            <ScaleLabel $x={152}>40x</ScaleLabel>
            <ScaleLabel $x={299}>80x</ScaleLabel>
            <ScaleLabel $x={447}>120x</ScaleLabel>
            <ScaleLabel $x={594}>160x</ScaleLabel>
            <ScaleLabel $x={726}>200x</ScaleLabel>
          </ScaleBox>
          <InfoBox>
            <InfoRow>Maximum position size available after leverage adjustment<InfoVal>3,190,712.00 USDT</InfoVal></InfoRow>
            <InfoRow>Maximum available market order after adjustment<InfoVal>0.005 ETH</InfoVal></InfoRow>
            <InfoRow>Margin required<InfoVal>0.4204 USDT</InfoVal></InfoRow>
            <InfoRow>Est. Liq. Price<InfoVal>2,678.36 USDT</InfoVal></InfoRow>
          </InfoBox>
          <BtnRow>
            <Cancel>Cancel</Cancel>
            <Confirm>Confirm</Confirm>
          </BtnRow>
        </Modal>
        <CursorArrow width="56" height="54" viewBox="0 0 56 54">
          <path d="M6 6 50 23 29 33 23 48Z" fill={orange} stroke={orange} strokeWidth="3" strokeLinejoin="round" />
        </CursorArrow>
      </Stage>
    </>
  );
}
